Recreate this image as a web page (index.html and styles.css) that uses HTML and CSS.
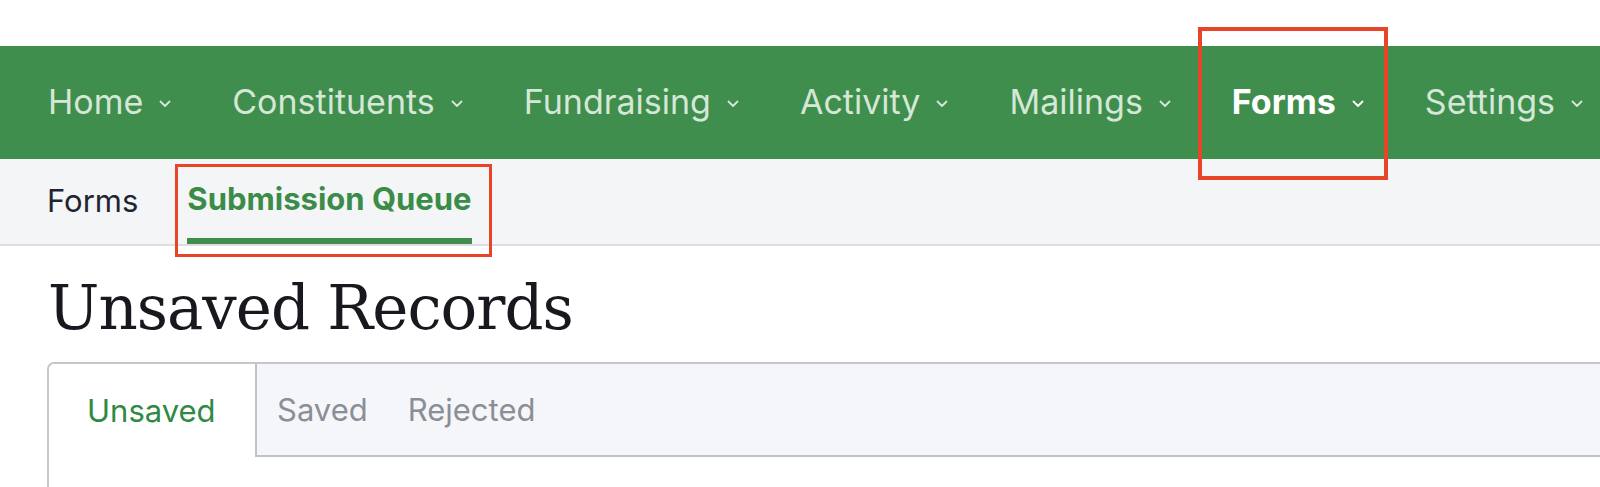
FILE: index.html
```html
<!DOCTYPE html>
<html lang="en">
<head>
<meta charset="utf-8"/>
    <title>Unsaved Records</title>
    <link rel="stylesheet" href="styles.css">
</head>
<body>
    <nav class="topnav">
        <ul>
            <li><a href="#">Home</a><svg class="chev" viewBox="0 0 12 8"><polyline points="1.5,1.5 6,6 10.5,1.5"/></svg></li>
            <li><a href="#">Constituents</a><svg class="chev" viewBox="0 0 12 8"><polyline points="1.5,1.5 6,6 10.5,1.5"/></svg></li>
            <li><a href="#">Fundraising</a><svg class="chev" viewBox="0 0 12 8"><polyline points="1.5,1.5 6,6 10.5,1.5"/></svg></li>
            <li><a href="#">Activity</a><svg class="chev" viewBox="0 0 12 8"><polyline points="1.5,1.5 6,6 10.5,1.5"/></svg></li>
            <li><a href="#">Mailings</a><svg class="chev" viewBox="0 0 12 8"><polyline points="1.5,1.5 6,6 10.5,1.5"/></svg></li>
            <li class="current"><a href="#">Forms</a><svg class="chev" viewBox="0 0 12 8"><polyline points="1.5,1.5 6,6 10.5,1.5"/></svg><span class="mark mark-nav"></span></li>
            <li><a href="#">Settings</a><svg class="chev" viewBox="0 0 12 8"><polyline points="1.5,1.5 6,6 10.5,1.5"/></svg></li>
        </ul>
    </nav>

    <div class="subnav">
        <a href="#">Forms</a>
        <a href="#" class="active">Submission Queue<span class="mark mark-sub"></span></a>
    </div>

    <main class="content">
        <h1>Unsaved Records</h1>
        <div class="card">
            <div class="tabs">
                <a href="#" class="tab active">Unsaved</a>
                <a href="#" class="tab">Saved</a>
                <a href="#" class="tab">Rejected</a>
            </div>
            <div class="card-body"></div>
        </div>
    </main>
</body>
</html>
```

FILE: styles.css
```css
body {
    margin: 0;
    padding-top: 46px;
    font-family: Inter, "Liberation Sans", sans-serif;
    background: #ffffff;
    overflow: hidden;
}

a {
    text-decoration: none;
}

/* top green bar */
.topnav {
    background: #3f8e4d;
    height: 113px;
}
.topnav ul {
    list-style: none;
    margin: 0;
    padding: 0 0 0 48px;
    height: 100%;
    display: flex;
    gap: 61px;
    white-space: nowrap;
}
.topnav li {
    display: flex;
    align-items: center;
    gap: 16px;
    position: relative;
    padding-bottom: 2px;
}
.topnav a {
    color: #d5e7d6;
    font-size: 34px;
}
.topnav .chev {
    width: 12px;
    height: 8px;
    fill: none;
    stroke: #d5e7d6;
    stroke-width: 1.8;
    stroke-linecap: round;
    stroke-linejoin: round;
    margin-top: 4px;
}
.topnav .current a {
    color: #ffffff;
    font-weight: 700;
}
.topnav .current .chev {
    stroke: #ffffff;
}

/* sub navigation */
.subnav {
    background: #f4f5f7;
    border-bottom: 2px solid #dcdee3;
    height: 85px;
    display: flex;
    padding-left: 47px;
    gap: 49px;
}
.subnav a {
    color: #1e2431;
    font-size: 31px;
    display: flex;
    align-items: center;
    padding-bottom: 3px;
    position: relative;
}
.subnav a.active {
    color: #3a8c48;
    font-weight: 700;
    border-bottom: 6px solid #3f8e4d;
    padding-bottom: 0;
}

/* red annotation boxes */
.mark {
    position: absolute;
    border: 3px solid #e8442a;
    pointer-events: none;
}
.mark-nav {
    left: -34px;
    right: -24px;
    top: -19px;
    bottom: -21px;
    border-width: 4px;
}
.mark-sub {
    left: -12px;
    right: -20px;
    top: 5px;
    bottom: -19px;
}

/* page */
.content {
    padding: 22px 0 0 47px;
}
.content h1 {
    margin: 0 0 14px 1px;
    font-family: "DejaVu Serif", "Liberation Serif", serif;
    font-weight: 400;
    font-size: 61px;
    letter-spacing: -1px;
    color: #17191f;
    line-height: 80px;
}

.card {
    border: 2px solid #c4c7ce;
    border-right: none;
    border-bottom: none;
    border-radius: 7px 0 0 0;
    height: 200px;
}
.tabs {
    display: flex;
    background: #f5f6f9;
    border-bottom: 2px solid #bfc2ca;
    border-radius: 6px 0 0 0;
    height: 91px;
}
.tab {
    font-size: 31px;
    color: #8b8e95;
    display: flex;
    align-items: center;
    padding: 0 20px;
}
.tab.active {
    background: #ffffff;
    color: #2f8a42;
    padding: 0 38px;
    width: 130px;
    border-right: 2px solid #bfc2ca;
    margin-bottom: -2px;
    border-radius: 6px 0 0 0;
}
.card-body {
    background: #ffffff;
}
```
